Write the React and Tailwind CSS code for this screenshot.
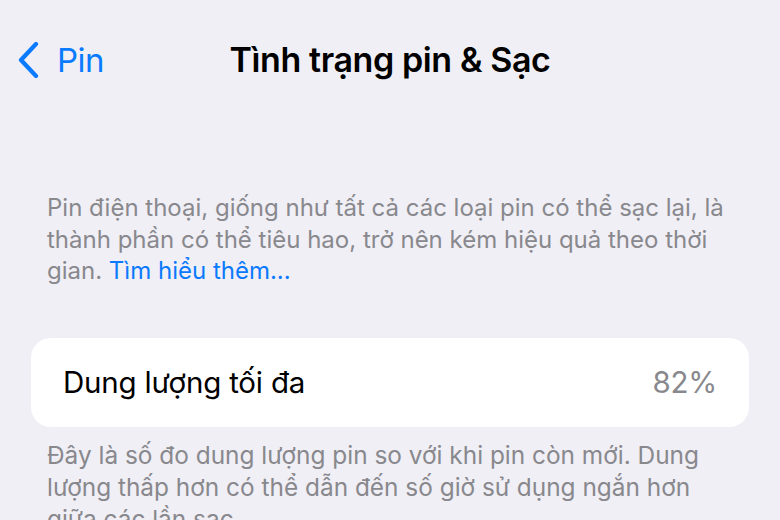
export default function App() {
  return (
    <div className="w-[780px] h-[520px] overflow-hidden bg-[#f0eff5] font-['Inter','Noto_Sans',sans-serif]">
      {/* navigation bar */}
      <div className="relative flex items-center justify-center h-[60px] mt-[30px]">
        <button className="absolute left-[17px] top-0 h-full flex items-center gap-[18px] text-[#0a7aff]">
          <svg width="22" height="36" viewBox="0 0 22 36" fill="none">
            <path d="M19 2 L4 18 L19 34" stroke="currentColor" strokeWidth="4.2" strokeLinecap="round" strokeLinejoin="round" />
          </svg>
          <span className="text-[33px] leading-none tracking-[-0.5px]">Pin</span>
        </button>
        <h1 className="text-[34px] font-semibold text-black leading-none tracking-[-0.4px]">Tình trạng pin &amp; Sạc</h1>
      </div>

      {/* explanation */}
      <p className="mt-[102px] px-[47px] text-[24px] leading-[31.5px] text-[#88888d]">
        <span className="block whitespace-nowrap">Pin điện thoại, giống như tất cả các loại pin có thể sạc lại, là</span>
        <span className="block whitespace-nowrap">thành phần có thể tiêu hao, trở nên kém hiệu quả theo thời</span>
        <span className="block whitespace-nowrap">
          gian. <span className="text-[#0a7aff]">Tìm hiểu thêm...</span>
        </span>
      </p>

      {/* maximum capacity row */}
      <div className="mt-[51px] mx-[31px] h-[89px] rounded-[20px] bg-white flex items-center justify-between px-[32px]">
        <span className="text-[29.5px] text-black tracking-[-0.2px]">Dung lượng tối đa</span>
        <span className="text-[29.5px] text-[#88888d] tracking-[-0.2px]">82%</span>
      </div>

      <p className="mt-[12px] px-[47px] text-[24.4px] leading-[32px] text-[#88888d]">
        <span className="block whitespace-nowrap">Đây là số đo dung lượng pin so với khi pin còn mới. Dung</span>
        <span className="block whitespace-nowrap">lượng thấp hơn có thể dẫn đến số giờ sử dụng ngắn hơn</span>
        <span className="block whitespace-nowrap">giữa các lần sạc.</span>
      </p>
    </div>
  );
}
